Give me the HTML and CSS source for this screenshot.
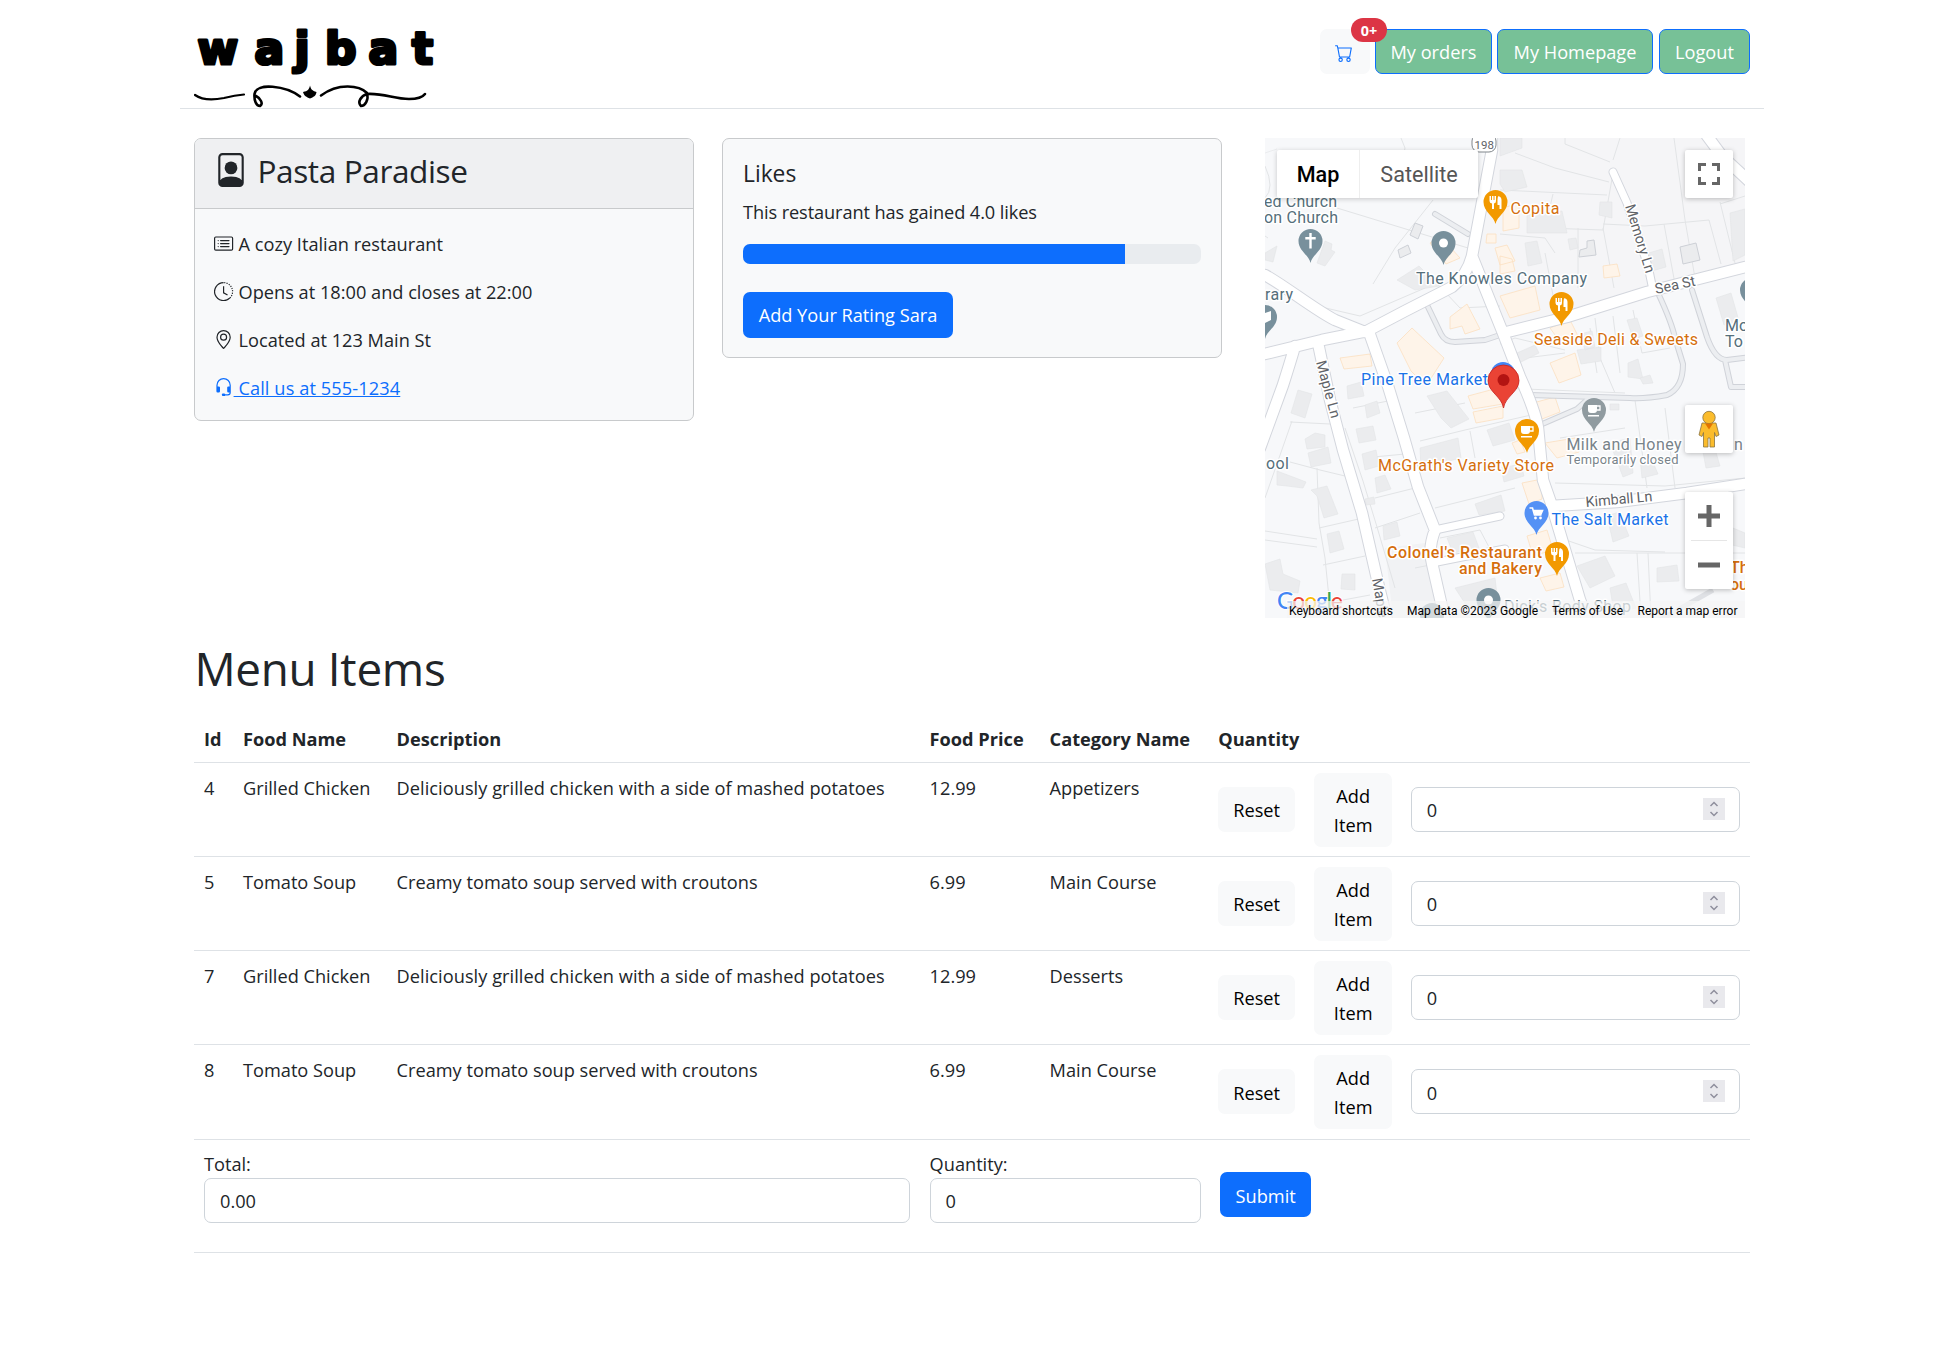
FILE: index.html
```html
<!DOCTYPE html>
<html lang="en">
<head>
<meta charset="utf-8">
<title>Pasta Paradise - wajbat</title>
<link rel="stylesheet" href="styles.css">
</head>
<body>
<div class="container">
  <header class="topbar">
    <svg class="logo" width="250" height="95" viewBox="0 0 250 95" role="img">
      <text class="logo-word" y="50.300" x="3.500 60.500 100.500 131 174.500 218">wajbat</text>
      <g fill="none" stroke="#000" stroke-linecap="round">
        <path stroke-width="2.200" d="M1 81C8 86 20 86 30 84C38 82 44 81 50 80.500"/>
        <path stroke-width="2.600" d="M106 82.500C92 72 62 68 60.500 80C60 86 62 92 66 92C70 90 66 84 62 82"/>
        <path stroke-width="2.600" d="M127 81.500C144 69 165 71 173 79C175 86 171 92 167 92C163 88 167 82 173 80C190 79 200 85 215 85C223 85 228 84 231 80"/>
      </g>
      <path d="M116 71.500c1 4 2 5 6.500 6.500c-.5 4-3 5-6.500 6.500c-3.500-1.500-6-2.500-7-6.500c5-1 6-2.500 7-6.500z"/>
    </svg>
    <nav class="actions">
      <a class="btn btn-cart">
        <svg class="bi" viewBox="0 0 16 16"><path d="M0 1.5A.5.5 0 0 1 .5 1H2a.5.5 0 0 1 .485.379L2.89 3H14.5a.5.5 0 0 1 .491.592l-1.500 8A.5.5 0 0 1 13 12H4a.5.5 0 0 1-.491-.408L2.010 3.607 1.610 2H.5a.5.5 0 0 1-.5-.5zM3.102 4l1.313 7h8.170l1.313-7H3.102zM5 12a2 2 0 1 0 0 4 2 2 0 0 0 0-4zm7 0a2 2 0 1 0 0 4 2 2 0 0 0 0-4zm-7 1a1 1 0 1 1 0 2 1 1 0 0 1 0-2zm7 0a1 1 0 1 1 0 2 1 1 0 0 1 0-2z"/></svg>
        <span class="badge">0+</span>
      </a>
      <a class="btn btn-green w-orders">My orders</a>
      <a class="btn btn-green w-home">My Homepage</a>
      <a class="btn btn-green w-logout">Logout</a>
    </nav>
  </header>

  <section class="row">
    <div class="col">
      <div class="card">
        <div class="card-header">
          <svg class="bi" viewBox="0 0 16 16"><path d="M12 1a1 1 0 0 1 1 1v10.755S12 11 8 11s-5 1.755-5 1.755V2a1 1 0 0 1 1-1h8zM4 0a2 2 0 0 0-2 2v12a2 2 0 0 0 2 2h8a2 2 0 0 0 2-2V2a2 2 0 0 0-2-2H4z"/><path d="M8 10a3 3 0 1 0 0-6 3 3 0 0 0 0 6z"/></svg>
          <h3>Pasta Paradise</h3>
        </div>
        <div class="card-body info">
          <p><svg class="bi" viewBox="0 0 16 16"><path d="M14.500 3a.5.5 0 0 1 .5.5v9a.5.5 0 0 1-.5.5h-13a.5.5 0 0 1-.5-.5v-9a.5.5 0 0 1 .5-.5h13zm-13-1A1.500 1.500 0 0 0 0 3.500v9A1.500 1.500 0 0 0 1.500 14h13a1.500 1.500 0 0 0 1.500-1.500v-9A1.500 1.500 0 0 0 14.500 2h-13z"/><path d="M5 8a.5.5 0 0 1 .5-.5h7a.5.5 0 0 1 0 1h-7A.5.5 0 0 1 5 8zm0-2.500a.5.5 0 0 1 .5-.5h7a.5.5 0 0 1 0 1h-7a.5.5 0 0 1-.5-.5zm0 5a.5.5 0 0 1 .5-.5h7a.5.5 0 0 1 0 1h-7a.5.5 0 0 1-.5-.5zm-1-5a.5.5 0 1 1-1 0 .5.5 0 0 1 1 0zM4 8a.5.5 0 1 1-1 0 .5.5 0 0 1 1 0zm0 2.500a.5.5 0 1 1-1 0 .5.5 0 0 1 1 0z"/></svg><span>A cozy Italian restaurant</span></p>
          <p><svg class="bi line" viewBox="0 0 16 16"><path d="M8 .5A7.500 7.500 0 1 0 13.300 13.300M8 3.500V9l3.300 1.900"/><path stroke-dasharray="1 1" d="M8.500 .5A7.500 7.500 0 0 1 13.300 13.300"/></svg><span>Opens at 18:00 and closes at 22:00</span></p>
          <p><svg class="bi" viewBox="0 0 16 16"><path d="M12.166 8.940c-.524 1.062-1.234 2.120-1.960 3.070A31.493 31.493 0 0 1 8 14.580a31.481 31.481 0 0 1-2.206-2.570c-.726-.95-1.436-2.008-1.960-3.070C3.304 7.867 3 6.862 3 6a5 5 0 0 1 10 0c0 .862-.305 1.867-.834 2.940zM8 16s6-5.686 6-10A6 6 0 0 0 2 6c0 4.314 6 10 6 10z"/><path d="M8 8a2 2 0 1 1 0-4 2 2 0 0 1 0 4zm0 1a3 3 0 1 0 0-6 3 3 0 0 0 0 6z"/></svg><span>Located at 123 Main St</span></p>
          <p class="phone"><svg class="bi" viewBox="0 0 16 16"><path d="M8 1a5 5 0 0 0-5 5v1h1a1 1 0 0 1 1 1v3a1 1 0 0 1-1 1H3a1 1 0 0 1-1-1V6a6 6 0 1 1 12 0v6a2.500 2.500 0 0 1-2.500 2.500H9.366a1 1 0 0 1-.866.5h-1a1 1 0 1 1 0-2h1a1 1 0 0 1 .866.5H11.500A1.500 1.500 0 0 0 13 12h-1a1 1 0 0 1-1-1V8a1 1 0 0 1 1-1h1V6a5 5 0 0 0-5-5z"/></svg><a>&nbsp;Call us at 555-1234</a></p>
        </div>
      </div>
    </div>

    <div class="col">
      <div class="card card-body likes">
        <h5>Likes</h5>
        <p>This restaurant has gained 4.0 likes</p>
        <div class="progress"><div class="progress-bar" style="width:83.4%"></div></div>
        <a class="btn btn-primary w-rating">Add Your Rating Sara</a>
      </div>
    </div>

    <div class="col col-map">
      <div class="map">
        <svg class="map-canvas" width="480" height="480" viewBox="0 0 480 480">
          <defs>
            <path id="drop" d="M0 22C-1.500 14-12 10-12 0A12 12 0 1 1 12 0C12 10 1.500 14 0 22z"/>
            <g id="fork" fill="#fff"><path d="M-6-6h1.500v4h1v-4h1.500v4h1v-4h1.500v5q0 2-2 2.500v5.500h-2v-5.500q-2.500-.5-2.500-2.500zM3-6q3 1 3 4v9h-2v-4h-2v-5q0-3 1-4z"/></g>
            <g id="cup" fill="#fff"><path d="M-6-5h9v5q0 3-3 3h-3q-3 0-3-3zM-6 5h11v1.500h-11z"/><path fill="none" stroke="#fff" stroke-width="1.300" d="M3-4h3v4h-3"/></g>
            <path id="roads" d="M0 137C20 148 50 172 70 182L100 194M0 216L57 202L102 193L140 173L187 149Q202 137 207 118L227 12V0M207 118L238 195L255 239Q270 272 273 290L278 342L286 365L315 462L322 480M238 195L302 179L382 154L480 129M440-5L457 18L485 44M286 368L352 364L422 355L480 346M53 205L65 262L78 312L97 375L113 445L122 482M30 208Q25 225 18 247L-5 310M104 194L123 248L139 300L153 349L170 392Q163 410 167 425L180 482"/>
            <path id="minor" d="M348 34L362 65L383 128L388 152M170 392L235 378M167 425L197 419L240 411"/>
            <path id="lanes" d="M393 155Q407 185 410 200L418 226Q418 250 402 257Q380 261 365 260L265 257M427 152L442 199Q450 222 462 222L485 219M460 222L466 249L485 249M275 287L312 271L322 262M163 169L176 196Q180 204 190 204L220 202L238 196M170 76L203 96"/>
          </defs>
          <rect width="480" height="480" fill="#f7f8fa"/>
          <g fill="#f1f2f4">
            <path d="M235 0L480 0V125L380 150L240 190L210 115z" opacity=".45"/>
            <path d="M120 410L160 405L175 480H128z"/>
          </g>
          <g class="parcels">
            <path d="M72 70L203 110M136 30L140 10L136 0M168 62L130 110L108 146M0 28Q10 50 0 60M3 100L0 98M13 150L52 168L95 178L160 150M250 15L290 30L344 44M355 0L348 22M300 0V6L345 24M235 52L342 57M288 56L280 90L338 92L348 35M409 0L420 82L430 140M338 86L380 88L444 82L456 126M399 86L410 146M313 90V150M338 90L349 150M235 96L280 100L290 115M280 115L290 168M455 66L480 58M455 64L470 125"/>
            <path d="M235 206L250 200L300 212M348 178L355 235M368 172L377 215L405 210M330 180L335 220L350 255M244 222L300 215M325 190L332 235M235 250L360 255M400 270L410 350M370 262L382 350M295 300L360 290M290 345L400 348L480 340M155 303L200 292L275 275M205 293L210 320M170 370L250 350M167 140L195 170L235 168M150 275L200 265"/>
            <path d="M25 284L65 286M25 324L55 332L80 338M52 330L54 385L60 420L64 460M0 393L52 401M0 402L52 409M54 390L98 380M58 427L100 418M80 290L98 343L112 389L130 450M88 270L128 262M98 320L140 316M110 360L150 350M110 390L155 375M62 465L105 457M310 415H480M372 415L376 480M295 400L330 412L400 414M383 415L386 480M150 430L165 427M175 400L215 392L235 430M27 283L0 360"/>
          </g>
          <g class="building">
            <path d="M0 115L12 108L8 124L0 122zM60 103l7 3-1 6 4 2-10 14-8-3zM132 142L154 128L174 148L150 152zM235 0h22v10l-22 8zM235 32h22l5 17-22 5-5-8zM262 77l35-4 5 22h-40zM260 105l12-2 5 22-14 3zM335 64h12v16l-13-3zM303 101l8-1 2 10-8 2zM384 115l13-4 4 18-14 4zM465 75l15-4v46l-12 6zM451 160l15-5 8 28-15 4zM0 15l12-4M312 212l24-3v14l-20 3zM315 196l12-3 3 16-10 3zM362 182l10-2 6 18-10 3zM363 225l10-4 5 20-15-2zM252 215l18-8 4 8-20 10z"/>
            <path d="M33 252l14 4-7 24-14-5zM40 301l10-6 10 2v12l-18 2zM43 315l20-6 3 16-20 4zM12 333l16 6 13 5-3 6-16-2-10-1zM46 352l16-4 11 28-14 4-7-22zM62 396l12-3 5 18-14 4zM0 426l15-5 3 15 17 7-2 12-28-3zM77 436h13v16l-14-1zM82 248l14-4 3 14-16 3zM100 267l12-4 3 12-13 5zM91 291l17-3 3 14-17 3zM97 316l14-4 3 16-14 4zM110 340l10-3 6 14-14 4zM118 388l14-4 3 14-16 4zM100 361l9-2 1 7-9 1zM155 310l38-10 3 20-40 10zM162 258l20-5 22 28-18 9-10-10zM222 292l22-7 6 17-22 6zM210 366l26-9 4 16-26 4zM182 400l26-6 6 16-26 5zM190 450l40-10 3 25-30 5zM312 428l28-10 10 20-25 12zM392 430l20-3 2 16-22 1zM345 450l16-5 10 25-22 5zM342 378l12-4 10 24-16 6zM438 314l12-3 5 17-14 2zM345 305l20-5 3 35-10 4zM375 320l12 2 6 14-16 4zM468 390l12 5v15l-13-3zM375 240l10-3 3 8-10 1zM345 266h9v6h-9zM236 330l20-4 3 12-20 6z"/>
            <path class="outlined" d="M150 85l8 3-5 13-8-4zM133 112l10-5 3 8-11 5zM315 112l7-2v-7l7-1 2 15-17 2zM415 109l16-4 4 17-17 4z"/>
          </g>
          <g class="shop">
            <path d="M165 105l10-7 20 22-14 6zM238 70l16-5v25l-16 3zM235 118l12 3 3 12-15 3zM222 96h9v9h-10zM230 110l12-3 8 16-15 4zM235 158l35-10 5 24-30 8zM185 179l17-13 13 25-15 5-3-8-12 3zM132 205l15-15 32 30-18 28-15-15zM75 220l30-4 2 12-28 3zM285 190l20-8 8 16-18 6zM338 128l14-2 3 12-16 2zM285 225l25-10 6 22-22 8zM203 258l30-8 5 16-30 5zM208 274l30-6v12l-27 5zM268 265l22-6 5 15-18 7zM280 305l30-5 4 14-22 6zM257 345l20-4v20l-13 5zM262 398l20-6 6 20-20 6zM247 305l8-3 5 12-8 2zM275 440l20-5 4 14-18 4z"/>
          </g>
          <g class="roads">
            <use href="#lanes" class="edge-lane"/><use href="#lanes" class="fill-lane"/>
            <use href="#minor" class="edge-minor"/><use href="#roads" class="edge"/>
            <use href="#minor" class="fill-minor"/><use href="#roads" class="fill"/>
          </g>
          <path d="M448 452L395 482" stroke="#dfe1e5" stroke-width="5"/>

          <g class="lbl street">
            <text transform="translate(360 68) rotate(73)" textLength="71">Memory Ln</text>
            <text transform="translate(391 156) rotate(-12)" textLength="41">Sea St</text>
            <text transform="translate(321 369) rotate(-5)" textLength="67">Kimball Ln</text>
            <text transform="translate(51 224) rotate(75)" textLength="59">Maple Ln</text>
            <text transform="translate(107 441) rotate(80)">Maple Ln</text>
          </g>
          <rect x="207" y="-4" width="24" height="18" rx="7" fill="#fff" stroke="#80868b"/>
          <text x="209.500" y="10.500" font-size="11.500" fill="#5f6368">198</text>

          <g class="pins">
            <g transform="translate(45.500 103)"><use href="#drop" fill="#78909c"/><path d="M-1.200-8h2.400v4h4v2.400h-4v9h-2.400v-9h-4v-2.400h4z" fill="#fff"/></g>
            <g transform="translate(178.500 105)"><use href="#drop" fill="#78909c"/><circle r="4.500" fill="#fff"/></g>
            <g transform="translate(0 179)"><use href="#drop" fill="#78909c"/><path d="M0-4l6-2v9l-6 3z" fill="#fff"/></g>
            <g transform="translate(487 152)"><use href="#drop" fill="#78909c"/></g>
            <g transform="translate(223.500 462)"><use href="#drop" fill="#78909c"/><circle r="4.500" fill="#fff"/></g>
            <g transform="translate(167 477)"><use href="#drop" fill="#78909c"/></g>
            <g transform="translate(230.500 64)"><use href="#drop" fill="#f29900"/><use href="#fork"/></g>
            <g transform="translate(296.500 166)"><use href="#drop" fill="#f29900"/><use href="#fork"/></g>
            <g transform="translate(292 416)"><use href="#drop" fill="#f29900"/><use href="#fork"/></g>
            <g transform="translate(262 293)"><use href="#drop" fill="#f29900"/><use href="#cup"/></g>
            <g transform="translate(329 272)"><use href="#drop" fill="#909ba0"/><use href="#cup"/></g>
            <g transform="translate(271.500 375)"><use href="#drop" fill="#5491f5"/><path d="M-7-5h3l2 7h7M-3-2.500h9L4.500 1h-6" fill="none" stroke="#fff" stroke-width="1.600"/><path d="M-3-3h9L5 1h-7z" fill="#fff"/><circle cx="-1" cy="5" r="1.400" fill="#fff"/><circle cx="4" cy="5" r="1.400" fill="#fff"/></g>
            <circle cx="238" cy="236" r="12" fill="#4285f4"/>
          </g>

          <g class="lbl slate">
            <text x="-1" y="69" textLength="73">ed Church</text>
            <text x="-1" y="85" textLength="74">on Church</text>
            <text x="151" y="145.500" textLength="171">The Knowles Company</text>
            <text x="0" y="162" textLength="28">rary</text>
            <text x="1" y="331" textLength="23">ool</text>
            <text x="460" y="193">Mo</text>
            <text x="460" y="209">To</text>
            <text x="239" y="474" textLength="127">Dick's Body Shop</text>
          </g>
          <g class="lbl orange">
            <text x="245.500" y="76" textLength="49">Copita</text>
            <text x="269" y="207" textLength="164">Seaside Deli &amp; Sweets</text>
            <text x="113" y="333" textLength="176">McGrath's Variety Store</text>
            <g class="medium">
              <text x="122" y="419.500" textLength="155">Colonel's Restaurant</text>
              <text x="194" y="436" textLength="83">and Bakery</text>
              <text x="465" y="435">Th</text>
              <text x="465" y="452">ou</text>
            </g>
          </g>
          <g class="lbl blue">
            <text x="96" y="247" textLength="127">Pine Tree Market</text>
            <text x="286.500" y="387" textLength="117">The Salt Market</text>
          </g>
          <g class="lbl gray">
            <text x="301.500" y="312" textLength="115">Milk and Honey</text>
            <text x="469" y="312">n</text>
            <text x="301.500" y="326" font-size="13" textLength="112">Temporarily closed</text>
          </g>

          <path d="M238.500 270C236.500 258 223 254 223 242.500A15.500 15.500 0 0 1 254 242.500C254 254 240.500 258 238.500 270z" fill="#ea4335" stroke="#c5221f" stroke-width=".8"/>
          <circle cx="238.500" cy="242" r="6" fill="#b31412"/>

          <text class="google" x="12" y="471" textLength="66"><tspan fill="#4285f4">G</tspan><tspan fill="#ea4335">o</tspan><tspan fill="#fbbc04">o</tspan><tspan fill="#4285f4">g</tspan><tspan fill="#34a853">l</tspan><tspan fill="#ea4335">e</tspan></text>
          <rect x="22" y="463" width="458" height="17" fill="#f5f5f5" opacity=".72"/>
          <g class="legal">
            <text x="24" y="477" textLength="104">Keyboard shortcuts</text>
            <text x="142" y="477" textLength="131">Map data ©2023 Google</text>
            <text x="287" y="477" textLength="71">Terms of Use</text>
            <text x="372.500" y="477" textLength="100">Report a map error</text>
          </g>
        </svg>
        <div class="map-type"><span class="active">Map</span><span>Satellite</span></div>
        <div class="ctl full"><svg width="22" height="22" viewBox="0 0 22 22"><path d="M1.500 8V1.500H8M14 1.500h6.500V8M20.500 14v6.500H14M8 20.500H1.500V14" fill="none" stroke="#666" stroke-width="3"/></svg></div>
        <div class="ctl pegman"><svg width="22" height="38" viewBox="0 0 22 38"><g fill="#fbbc2c" stroke="#8a7340" stroke-width=".8"><path d="M4 13h14l3 12-3 1.500-1.500-4V37h-4.500v-9h-2v9H5.500V22.500L4 26.500 1 25z"/><circle cx="11" cy="7.500" r="6.200"/></g><path d="M7 13.500h8l-4 6z" fill="#e37400"/></svg></div>
        <div class="ctl zoom"><svg width="36" height="97" viewBox="0 0 36 97"><path d="M7 24h22M18 13v22M7 73h22" stroke="#666" stroke-width="5"/><path d="M0 48.500h36" stroke="#e6e6e6"/></svg></div>
      </div>
    </div>
  </section>

  <main class="menu">
    <h1>Menu Items</h1>
    <table>
      <colgroup><col class="c1"><col class="c2"><col class="c3"><col class="c4"><col class="c5"><col class="c6"><col class="c7"><col class="c8"></colgroup>
      <thead>
        <tr><th>Id</th><th>Food Name</th><th>Description</th><th>Food Price</th><th>Category Name</th><th>Quantity</th><th></th><th></th></tr>
      </thead>
      <tbody>
        <tr><td>4</td><td>Grilled Chicken</td><td class="desc">Deliciously grilled chicken with a side of mashed potatoes</td><td>12.99</td><td>Appetizers</td>
          <td><a class="btn btn-light reset">Reset</a></td><td><a class="btn btn-light add">Add<br>Item</a></td><td><div class="field qty"><span>0</span><svg class="spin" viewBox="0 0 22 22"><path d="M7.500 8l3.500-3.500L14.500 8M7.500 14l3.500 3.500 3.500-3.500"/></svg></div></td></tr>
        <tr><td>5</td><td>Tomato Soup</td><td>Creamy tomato soup served with croutons</td><td>6.99</td><td>Main Course</td>
          <td><a class="btn btn-light reset">Reset</a></td><td><a class="btn btn-light add">Add<br>Item</a></td><td><div class="field qty"><span>0</span><svg class="spin" viewBox="0 0 22 22"><path d="M7.500 8l3.500-3.500L14.500 8M7.500 14l3.500 3.500 3.500-3.500"/></svg></div></td></tr>
        <tr><td>7</td><td>Grilled Chicken</td><td class="desc">Deliciously grilled chicken with a side of mashed potatoes</td><td>12.99</td><td>Desserts</td>
          <td><a class="btn btn-light reset">Reset</a></td><td><a class="btn btn-light add">Add<br>Item</a></td><td><div class="field qty"><span>0</span><svg class="spin" viewBox="0 0 22 22"><path d="M7.500 8l3.500-3.500L14.500 8M7.500 14l3.500 3.500 3.500-3.500"/></svg></div></td></tr>
        <tr><td>8</td><td>Tomato Soup</td><td>Creamy tomato soup served with croutons</td><td>6.99</td><td>Main Course</td>
          <td><a class="btn btn-light reset">Reset</a></td><td><a class="btn btn-light add">Add<br>Item</a></td><td><div class="field qty"><span>0</span><svg class="spin" viewBox="0 0 22 22"><path d="M7.500 8l3.500-3.500L14.500 8M7.500 14l3.500 3.500 3.500-3.500"/></svg></div></td></tr>
      </tbody>
      <tfoot>
        <tr>
          <td colspan="3"><label>Total:</label><div class="field"><span>0.00</span></div></td>
          <td colspan="2"><label>Quantity:</label><div class="field count"><span>0</span></div></td>
          <td colspan="3"><a class="btn btn-primary submit">Submit</a></td>
        </tr>
      </tfoot>
    </table>
  </main>
</div>
</body>
</html>
```
FILE: styles.css
```css
* { box-sizing: border-box; }

body {
  margin: 0;
  background: #fff;
  color: #212529;
  font-family: "Open Sans", "Noto Sans", sans-serif;
  font-size: 18.2px;
  line-height: 28.8px;
}

h1, h3, h5, p { margin: 0; font-weight: 400; }

.container { width: 1584px; margin: 0 auto; }

.bi { width: 19.2px; height: 19.2px; fill: currentColor; flex: none; }
.bi.line { fill: none; stroke: currentColor; }

/* Top bar */
.topbar {
  height: 109px;
  padding: 14px 14px 0;
  display: flex;
  justify-content: space-between;
  border-bottom: 1px solid #dee2e6;
}
.logo { flex: none; }
.logo-word {
  font: bold 44px "DejaVu Sans", sans-serif;
  fill: #000;
  stroke: #000;
  stroke-width: 3.2;
  stroke-linejoin: round;
}
.actions { display: flex; align-items: flex-start; padding-top: 15px; }

.btn {
  display: inline-flex;
  align-items: center;
  justify-content: center;
  height: 45px;
  padding-top: 2px;
  border-radius: 7px;
  border: 1px solid transparent;
  white-space: nowrap;
}
.btn-cart { position: relative; width: 50px; background: #f8f9fa; color: #0d6efd; margin-right: 5px; }
.btn-cart .bi { width: 18px; height: 18px; margin-left: -2px; }
.btn-green { background: #77c197; border-color: #0d6efd; color: #fff; }
.w-orders { width: 117px; margin-right: 5px; }
.w-home { width: 156px; margin-right: 6px; }
.w-logout { width: 91px; }
.badge {
  position: absolute;
  z-index: 1;
  left: 30px;
  top: -12px;
  width: 36px;
  height: 24px;
  border-radius: 12px;
  background: #dc3545;
  color: #fff;
  font-size: 14.4px;
  font-weight: 700;
  line-height: 25px;
  text-align: center;
}

/* Cards row */
.row { display: flex; height: 538px; padding-top: 29px; }
.col { width: 528px; padding: 0 14.4px; }
.col-map { padding-left: 29px; }
.card {
  border: 1px solid #c8cacc;
  border-radius: 7px;
  background: #f8f9fa;
  overflow: hidden;
}
.card-header {
  display: flex;
  gap: 9px;
  height: 70px;
  padding: 14px 19px 0;
  background: #eff0f2;
  border-bottom: 1px solid #c8cacc;
}
.card-header .bi { width: 34px; height: 34px; }
.card-header h3 { font-size: 31.6px; line-height: 40px; margin-top: -2px; letter-spacing: -0.4px; }
.info { height: 211px; padding: 19px; display: flex; flex-direction: column; gap: 19.2px; }
.info p { display: flex; align-items: center; height: 28.8px; gap: 5px; padding-top: 4px; }
.info .bi { margin-top: -2px; }
.info .phone { color: #0d6efd; gap: 0; }
.phone a { text-decoration: underline; letter-spacing: .1px; }

.likes { height: 220px; padding: 19px 20px 19px 19.6px; display: flex; flex-direction: column; align-items: flex-start; }
.likes h5 { font-size: 22.8px; line-height: 30px; margin-top: 1px; }
.likes p { margin-top: 9px; letter-spacing: -0.1px; }
.progress { width: 100%; height: 20px; margin: 17px 0 28px; border-radius: 7px; background: #e9ecef; overflow: hidden; }
.progress-bar { height: 100%; background: #0d6efd; }
.btn-primary { background: #0d6efd; color: #fff; }
.w-rating { width: 210px; height: 46px; }

/* Map */
.map { position: relative; width: 480px; height: 480px; overflow: hidden; font-family: Roboto, sans-serif; }
.map-canvas { display: block; }
.parcels { fill: none; stroke: #e2e4e6; stroke-width: 1; }
.building { fill: #ebecee; stroke: #e2e4e6; stroke-width: .6; }
.outlined { stroke: #cdd0d6; stroke-width: 1; }
.shop { fill: #fef4e9; stroke: #fbdfc0; stroke-width: .8; }
.roads { fill: none; stroke-linecap: round; stroke-linejoin: round; }
.edge { stroke: #d3d6dd; stroke-width: 12.5; }
.fill { stroke: #fff; stroke-width: 10.5; }
.edge-minor { stroke: #d3d6dd; stroke-width: 9; }
.fill-minor { stroke: #fff; stroke-width: 7; }
.edge-lane { stroke: #d0d3d9; stroke-width: 6; }
.fill-lane { stroke: #eceef1; stroke-width: 4; }
.lbl { font-size: 16px; stroke: #fff; stroke-width: 3; stroke-linejoin: round; paint-order: stroke; }
.street { font-size: 14.5px; fill: #5f6368; }
.slate { fill: #546e7a; }
.orange { fill: #d56e0c; }
.blue { fill: #1a73e8; }
.gray { fill: #78838a; }
.medium { font-weight: 500; }
.google { font: 500 23px "Lato", sans-serif; stroke: #fff; stroke-width: 2; paint-order: stroke; }
.legal { font-size: 12px; fill: #000; }
.map-type {
  position: absolute;
  left: 12px;
  top: 12px;
  display: flex;
  height: 48px;
  background: #fff;
  border-radius: 2px;
  box-shadow: 0 1px 5px rgba(0, 0, 0, .2);
  font-size: 21.6px;
  line-height: 49px;
  color: #565656;
  text-align: center;
}
.map-type span { width: 118px; }
.map-type .active { width: 83px; color: #000; font-weight: 500; border-right: 1px solid #eee; }
.ctl {
  position: absolute;
  right: 12px;
  width: 48px;
  height: 48px;
  display: flex;
  align-items: center;
  justify-content: center;
  background: #fff;
  border-radius: 2px;
  box-shadow: 0 1px 5px rgba(0, 0, 0, .25);
}
.full { top: 12px; }
.pegman { top: 267px; }
.zoom { top: 354px; height: 97px; }

/* Menu table */
.menu { padding: 0 14.4px; }
.menu h1 { margin-top: -2px; height: 72px; font-size: 45.8px; line-height: 46px; letter-spacing: -0.3px; }
table { width: 1555.2px; border-collapse: collapse; table-layout: fixed; }
.c1 { width: 39px; } .c2 { width: 153.6px; } .c3 { width: 533px; } .c4 { width: 120px; }
.c5 { width: 168.6px; } .c6 { width: 96px; } .c7 { width: 96.6px; } .c8 { width: 348.4px; }
th, td { padding: 9.6px; text-align: left; vertical-align: top; border-bottom: 1px solid #dee2e6; white-space: nowrap; }
th { height: 45px; padding-top: 8px; padding-bottom: 7px; font-weight: 700; }
tbody td { height: 94.2px; padding-top: 10px; padding-bottom: 0; }
tbody tr:last-child td { height: 95px; }
tbody td:nth-child(-n+5) { padding-top: 11.4px; }
.desc { letter-spacing: .04px; }
.btn-light { background: #f8f9fa; color: #000; }
.reset { width: 77px; margin-top: 14.4px; }
.add { width: 78px; height: 74px; text-align: center; }
.field {
  display: flex;
  align-items: center;
  height: 45px;
  padding: 2px 15px 0;
  border: 1px solid #ced4da;
  border-radius: 7px;
}
.qty { margin-top: 14.4px; padding-right: 14px; justify-content: space-between; }
.spin { width: 22px; height: 22px; margin-top: -3px; background: #e9e9ed; fill: none; stroke: #8f8f9d; stroke-width: 1.5; }
tfoot td { height: 113px; padding-top: 10.4px; padding-bottom: 0; }
label { display: block; line-height: 28.8px; height: 27.8px; }
.count { margin-right: -2px; }
.submit { width: 91px; margin: 22px 0 0 2px; }
```
